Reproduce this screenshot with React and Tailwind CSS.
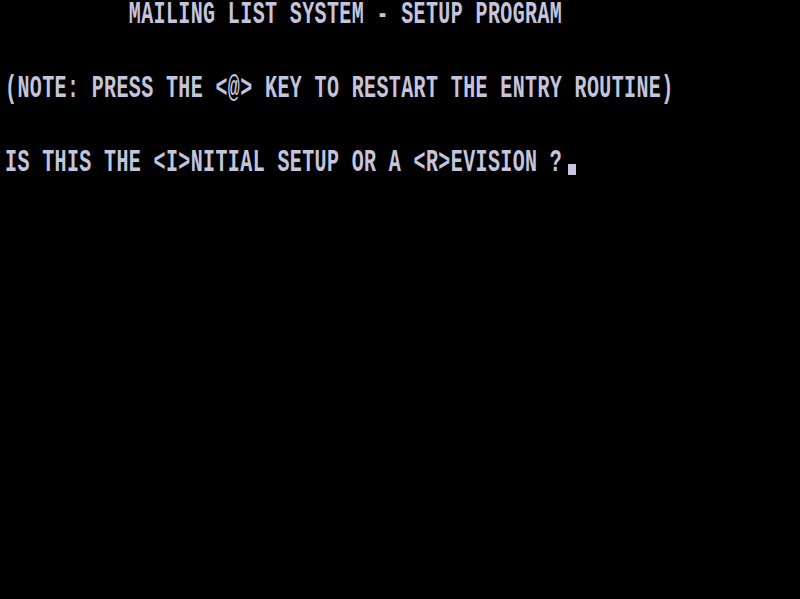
import React from 'react';

const LINES = [
  '          MAILING LIST SYSTEM - SETUP PROGRAM',
  '',
  '',
  '(NOTE: PRESS THE <@> KEY TO RESTART THE ENTRY ROUTINE)',
  '',
  '',
  'IS THIS THE <I>NITIAL SETUP OR A <R>EVISION ?',
];

function Row({ text, cursor }) {
  return (
    <div className="h-[24.7px] whitespace-pre flex items-start">
      <span className="inline-block origin-top scale-y-[1.6] tracking-[0.38px]">{text}</span>
      {cursor && <span className="inline-block w-[8px] h-[11px] mt-[12px] ml-[6px] bg-[#c4c4dc]" />}
    </div>
  );
}

export default function App() {
  return (
    <div
      className="w-[800px] h-[599px] bg-black text-[#c4c4dc] text-[20px] leading-[13px] font-bold pl-[5px] pt-[4px] overflow-hidden"
      style={{ fontFamily: '"Liberation Mono", "DejaVu Sans Mono", monospace' }}
    >
      {LINES.map((line, i) => (
        <Row key={i} text={line} cursor={i === LINES.length - 1} />
      ))}
    </div>
  );
}
